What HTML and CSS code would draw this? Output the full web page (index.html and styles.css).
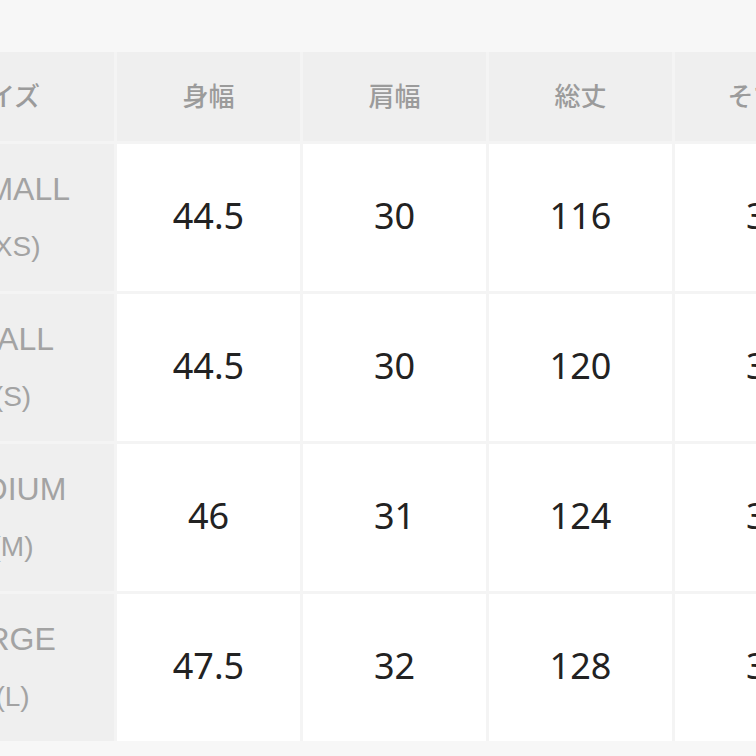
FILE: index.html
```html
<!DOCTYPE html>
<html lang="ja">
<head>
<meta charset="utf-8">
<title>サイズ表</title>
<link rel="stylesheet" href="styles.css">
</head>
<body>
<div class="page">
  <div class="size-table">
    <div class="cell head first">サイズ</div>
    <div class="cell head">身幅</div>
    <div class="cell head">肩幅</div>
    <div class="cell head">総丈</div>
    <div class="cell head">そで丈</div>

    <div class="cell label"><span class="l1">X-SMALL</span><span class="l2">(XS)</span></div>
    <div class="cell val">44.5</div>
    <div class="cell val">30</div>
    <div class="cell val">116</div>
    <div class="cell val">35</div>

    <div class="cell label"><span class="l1">SMALL</span><span class="l2">(S)</span></div>
    <div class="cell val">44.5</div>
    <div class="cell val">30</div>
    <div class="cell val">120</div>
    <div class="cell val">36</div>

    <div class="cell label"><span class="l1">MEDIUM</span><span class="l2">(M)</span></div>
    <div class="cell val">46</div>
    <div class="cell val">31</div>
    <div class="cell val">124</div>
    <div class="cell val">37</div>

    <div class="cell label"><span class="l1">LARGE</span><span class="l2">(L)</span></div>
    <div class="cell val">47.5</div>
    <div class="cell val">32</div>
    <div class="cell val">128</div>
    <div class="cell val">38</div>
  </div>
</div>
</body>
</html>
```
FILE: styles.css
```css
html, body {
  margin: 0;
  padding: 0;
  overflow: hidden;
  background: #f7f7f7;
}

.page {
  width: 756px;
  height: 756px;
  padding-top: 52px;
  box-sizing: border-box;
  overflow: hidden;
  background: #f7f7f7;
}

.size-table {
  display: grid;
  grid-template-columns: 225px repeat(4, 183px);
  grid-template-rows: 89px repeat(4, 147px);
  gap: 3px;
  margin-left: -111px;
  width: max-content;
  background: #f4f4f4;
}

.cell {
  display: flex;
  align-items: center;
  justify-content: center;
  text-align: center;
  box-sizing: border-box;
}

.head {
  background: #efefef;
  color: #9b9b9b;
  font-family: "Noto Sans CJK JP", "Liberation Sans", sans-serif;
  font-size: 26px;
  font-weight: 500;
  padding-bottom: 4px;
}

.label {
  background: #efefef;
  color: #a3a3a3;
  font-family: "Liberation Sans", "Noto Sans CJK JP", sans-serif;
  flex-direction: column;
}

.label .l1 {
  display: block;
  font-size: 32px;
  line-height: 58px;
}

.label .l2 {
  display: block;
  font-size: 28px;
  line-height: 58px;
  padding-left: 22px;
}

.val {
  background: #ffffff;
  color: #222222;
  font-family: "Noto Sans", "Liberation Sans", sans-serif;
  font-size: 36px;
  font-weight: 400;
  line-height: 40px;
  padding-bottom: 4px;
}
```
